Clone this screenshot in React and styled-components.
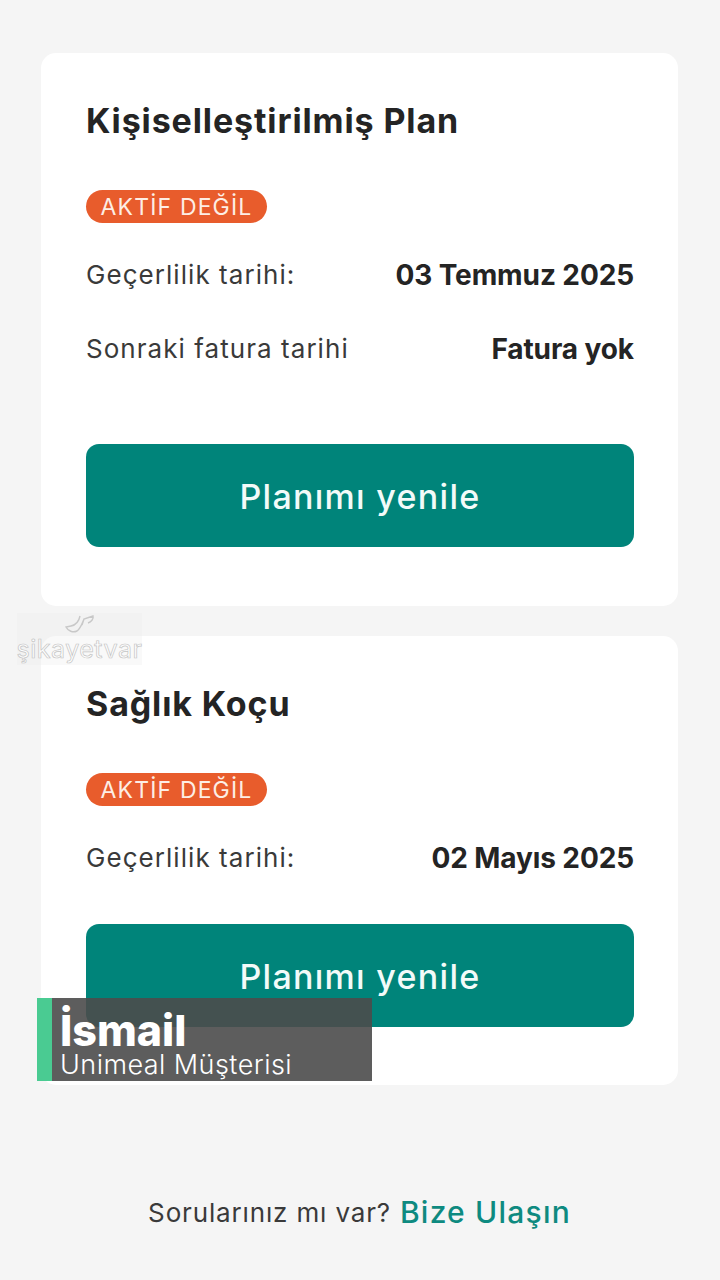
import React from "react";
import styled, { createGlobalStyle } from "styled-components";

const Global = createGlobalStyle`
  html, body { margin: 0; padding: 0; background: #f5f5f5; }
  body { font-family: "Inter", "Noto Sans", sans-serif; }
`;
const Page = styled.div`
  position: relative;
  width: 720px;
  height: 1280px;
  overflow: hidden;
  box-sizing: border-box;
  padding: 53px 42px 0 41px;
  display: flex;
  flex-direction: column;
  gap: 30px;
  background: #f5f5f5;
  color: #242424;
`;
const Card = styled.section`
  height: ${p => p.$h}px;
  box-sizing: border-box;
  background: #fff;
  border-radius: 15px;
  padding: 45px 44px 0 45px;
  display: flex;
  flex-direction: column;
`;
const Title = styled.h2`
  margin: 0;
  font-size: 34px;
  line-height: 46px;
  font-weight: 700;
  letter-spacing: 0.88px;
  color: #242424;
`;
const Badge = styled.div`
  margin-top: 46px;
  align-self: flex-start;
  box-sizing: border-box;
  width: 181px;
  height: 33px;
  border-radius: 17px;
  background: #e85c2c;
  color: #fdeee5;
  font-size: 23px;
  line-height: 34px;
  text-align: center;
  letter-spacing: 1.15px;
`;
const Row = styled.div`
  display: flex;
  justify-content: space-between;
  align-items: center;
  height: 40px;
  margin-top: ${p => p.$mt}px;
`;
const Label = styled.span`
  font-size: 26px;
  letter-spacing: 1.05px;
  color: #3a3a3a;
`;
const Value = styled.span`
  font-size: 28px;
  line-height: 40px;
  padding-top: 2px;
  font-weight: 700;
  letter-spacing: -0.1px;
  color: #242424;
`;
const Cta = styled.button`
  margin-top: ${p => p.$mt}px;
  height: 103px;
  width: 100%;
  border: 0;
  border-radius: 13px;
  background: #00847a;
  color: #f2fbf9;
  font-family: inherit;
  font-size: 34px;
  font-weight: 500;
  letter-spacing: 1.3px;
  padding: 1px 0 0;
`;
const Footer = styled.p`
  margin: 72px 0 0;
  height: 50px;
  display: flex;
  justify-content: center;
  align-items: center;
  gap: 9px;
  font-size: 26px;
  letter-spacing: 0.85px;
  color: #3a3a3a;
`;
const Contact = styled.span`
  font-size: 30px;
  font-weight: 500;
  letter-spacing: 1.2px;
  color: #0e8a80;
`;
const Caption = styled.div`
  position: absolute;
  left: 37px;
  top: 998px;
  width: 335px;
  height: 83px;
  box-sizing: border-box;
  border-left: 15px solid #4acb92;
  background: rgba(75, 75, 75, 0.9);
  padding: 11px 0 0 8px;
  color: #fff;
`;
const CaptionName = styled.div`
  font-size: 43px;
  line-height: 42px;
  font-weight: 800;
`;
const CaptionRole = styled.div`
  font-size: 27px;
  line-height: 28px;
  font-weight: 300;
  letter-spacing: 0.45px;
`;
const Watermark = styled.div`
  position: absolute;
  left: 17px;
  top: 613px;
  width: 125px;
  height: 52px;
  background: rgba(235, 235, 235, 0.3);
  display: flex;
  flex-direction: column;
  align-items: center;
`;
const WatermarkMark = styled.svg`
  width: 34px;
  height: 22px;
  flex: none;
`;
const WatermarkText = styled.div`
  font-size: 25px;
  line-height: 26px;
  margin-top: 1px;
  letter-spacing: 0.5px;
  white-space: nowrap;
  color: rgba(255, 255, 255, 0.9);
  -webkit-text-stroke: 0.7px #c4c4c4;
`;

export default function App() {
  return (
    <Page>
      <Global />
      <Card $h={553}>
        <Title>Kişiselleştirilmiş Plan</Title>
        <Badge>AKTİF DEĞİL</Badge>
        <Row $mt={31}>
          <Label>Geçerlilik tarihi:</Label>
          <Value>03 Temmuz 2025</Value>
        </Row>
        <Row $mt={34}>
          <Label>Sonraki fatura tarihi</Label>
          <Value>Fatura yok</Value>
        </Row>
        <Cta $mt={76}>Planımı yenile</Cta>
      </Card>
      <Card $h={449}>
        <Title>Sağlık Koçu</Title>
        <Badge>AKTİF DEĞİL</Badge>
        <Row $mt={31}>
          <Label>Geçerlilik tarihi:</Label>
          <Value>02 Mayıs 2025</Value>
        </Row>
        <Cta $mt={47}>Planımı yenile</Cta>
      </Card>
      <Footer>
        Sorularınız mı var? <Contact>Bize Ulaşın</Contact>
      </Footer>
      <Watermark>
        <WatermarkMark viewBox="0 0 34 22">
          <path d="M17 3c-1 5-4 9-9 10l-5 1c2 4 7 6 11 4 4-3 5-8 7-12l9-3c1 3-2 6-5 7M21 6l-2 6" fill="none" stroke="#c8c8c8" strokeWidth="1.4" />
        </WatermarkMark>
        <WatermarkText>şikayetvar</WatermarkText>
      </Watermark>
      <Caption>
        <CaptionName>İsmail</CaptionName>
        <CaptionRole>Unimeal Müşterisi</CaptionRole>
      </Caption>
    </Page>
  );
}
